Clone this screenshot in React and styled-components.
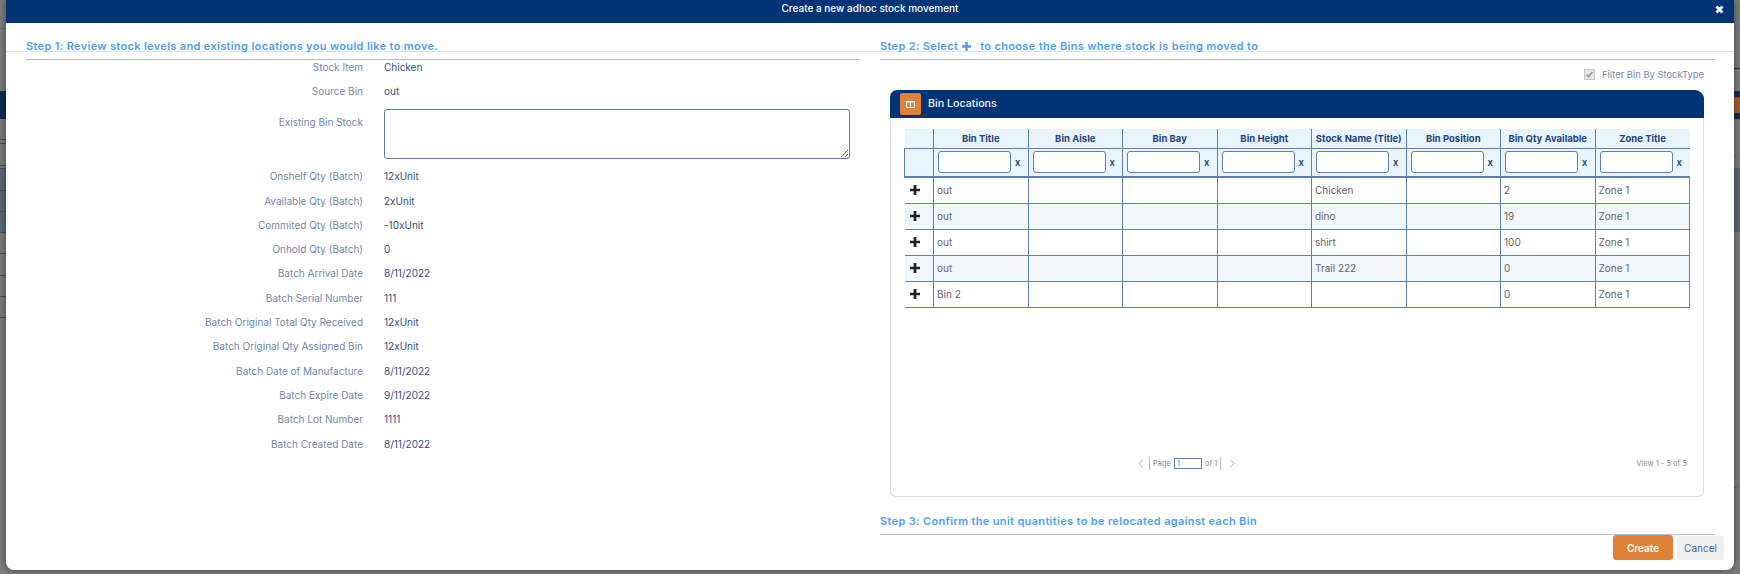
import React from 'react';
import styled, { createGlobalStyle } from 'styled-components';

const GlobalStyle = createGlobalStyle`
    html, body {
        margin: 0;
        padding: 0;
        height: 100%;
        overflow: hidden;
    }
    body {
        font-family: Inter, "Liberation Sans", sans-serif;
        background: #7e7e7e;
    }
    * {
        box-sizing: border-box;
    }
`;

const leftLine = (y, c = '#4a5262') => `linear-gradient(${c}, ${c}) 0 ${y}px / 6px 1px no-repeat`;
const rightLine = (y, c = '#4a5262') => `linear-gradient(${c}, ${c}) 100% ${y}px / 6px 1px no-repeat`;

// what shows of the page behind the dialog
const Page = styled.div`
    height: 574px;
    padding: 0 6px;
    background:
        ${leftLine(28, '#6a6a6a')}, ${leftLine(139)}, ${leftLine(143)}, ${leftLine(165)}, ${leftLine(168)},
        ${leftLine(190)}, ${leftLine(211)}, ${leftLine(232)}, ${leftLine(253)}, ${leftLine(275)},
        ${leftLine(296)}, ${leftLine(317)},
        ${rightLine(28, '#6a6a6a')}, ${rightLine(68, '#0f2b53')}, ${rightLine(156, '#6a6a6a')}, ${rightLine(487, '#6a6a6a')},
        linear-gradient(#a5602a, #a5602a) 100% 97px / 6px 16px no-repeat,
        linear-gradient(#0f2b53, #0f2b53) 0 91px / 100% 28px no-repeat,
        linear-gradient(#5f6b78, #5f6b78) 0 168px / 100% 64px no-repeat,
        #7e7e7e;
`;

const Modal = styled.div`
    height: 570px;
    background: #fff;
    border-radius: 0 0 8px 8px;
    box-shadow: 0 0 8px rgba(0, 0, 0, .5);
    display: flex;
    flex-direction: column;
`;

const ModalHeader = styled.div`
    flex: none;
    height: 23px;
    background: #003476;
    color: #fff;
    font-size: 10px;
    font-weight: 500;
    display: flex;
    align-items: center;
    justify-content: center;
    padding: 0 0 7px 0;
    position: relative;
`;

const CloseIcon = styled.svg`
    position: absolute;
    right: 10px;
    top: 5px;
    width: 9px;
    height: 9px;
`;

const ModalBody = styled.div`
    flex: 1;
    display: grid;
    grid-template-columns: 854px 1fr;
    padding-top: 17px;
    background: linear-gradient(#e3e3e3, #e3e3e3) 0 28px / 100% 1px no-repeat;
`;

const Column = styled.div`
    padding-left: 20px;
    display: flex;
    flex-direction: column;
`;

const StepTitle = styled.div`
    height: 20px;
    color: #4f9ff0;
    font-size: 11px;
    font-weight: 600;
    letter-spacing: .33px;
    line-height: 13px;
    border-bottom: 1px solid #b3bdcf;
    margin-right: ${p => p.$inset || 0}px;
    display: flex;
    align-items: flex-start;
    white-space: pre;
`;

const StepPlus = styled.svg`
    width: 9px;
    height: 9px;
    margin: 2px 6px 0 4px;
`;

const FormGrid = styled.div`
    display: grid;
    grid-template-columns: 337px 1fr;
    column-gap: 21px;
    font-size: 10px;
    line-height: 14px;
    margin-right: 20px;
`;

const Label = styled.div`
    color: #7388ad;
    text-align: right;
    height: ${p => p.$h || 24.3}px;
    padding-top: ${p => p.$top || 0}px;
`;

const Value = styled.div`
    color: #34507f;
    height: ${p => p.$h || 24.3}px;
`;

const NotesBox = styled.textarea`
    display: block;
    width: 466px;
    height: 50px;
    margin-top: 0;
    border: 1px solid #5b7aa8;
    border-radius: 3px;
    background: #fff;
    outline: none;
`;

const FilterRow = styled.div`
    height: 30px;
    display: flex;
    align-items: center;
    justify-content: flex-end;
    gap: 7px;
    padding: 0 30px 2px 0;
    font-size: 9.4px;
    color: #7388ad;
`;

const FakeCheck = styled.span`
    width: 11px;
    height: 11px;
    background: #e6e6e6;
    border: 1px solid #c8c8c8;
    display: flex;
    align-items: center;
    justify-content: center;
`;

const Panel = styled.div`
    width: 814px;
    height: 407px;
    margin-left: 10px;
    border: 1px solid #dcdcdc;
    border-top: 0;
    border-radius: 9px 9px 6px 6px;
    display: flex;
    flex-direction: column;
`;

const PanelHeader = styled.div`
    flex: none;
    height: 28px;
    margin: 0 -1px;
    background: #003476;
    border-radius: 7px 9px 0 0;
    display: flex;
    align-items: center;
    padding-left: 10px;
    gap: 7px;
`;

const PanelTitle = styled.span`
    color: #f1f4f9;
    font-size: 10.7px;
    font-weight: 500;
    margin-bottom: 2px;
`;

const PanelIcon = styled.span`
    width: 21px;
    height: 22px;
    background: #e0813a;
    border-radius: 2px;
    display: flex;
    align-items: center;
    justify-content: center;
`;

const TableWrap = styled.div`
    padding: 11px 13px 0 13px;
    flex: 1;
`;

const Grid = styled.table`
    border-collapse: collapse;
    table-layout: fixed;
    width: 786px;
    font-size: 10px;
`;

const HeadCell = styled.th`
    height: 19px;
    padding: 0;
    background: #eaf4fd;
    color: #1f437d;
    font-size: 9.5px;
    font-weight: 700;
    text-align: center;
    border-left: 1px solid #5f80ad;
    border-bottom: 1px solid #5f80ad;
    white-space: nowrap;
    &:first-child {
        border-left: 0;
    }
`;

const FilterCell = styled.td`
    height: 29px;
    padding: 0 0 0 4px;
    background: #eaf4fd;
    border-left: 1px solid #5f80ad;
    border-bottom: 2px solid #5f80ad;
`;

const FilterInner = styled.div`
    display: flex;
    align-items: center;
    gap: 4px;
    color: #1f437d;
    font-size: 9.5px;
    font-weight: 600;
`;

const FilterInput = styled.span`
    display: block;
    width: 73px;
    height: 22px;
    background: #fff;
    border: 1px solid #5f80ad;
    border-radius: 3px;
`;

const Row = styled.tr`
    background: ${p => (p.$alt ? '#f2f7fc' : '#fff')};
`;

const Cell = styled.td`
    height: 26px;
    padding: 0 3px;
    color: #666;
    border: 1px solid #5f80ad;
    &:first-child {
        border-left: 0;
        padding: 0 4px;
    }
`;

const RowPlus = styled.svg`
    display: block;
    width: 10px;
    height: 10px;
    margin: 0 0 0 1px;
`;

const Pager = styled.div`
    flex: none;
    margin: 0 16px 27px 13px;
    height: 12px;
    display: flex;
    align-items: center;
    color: #8b8b8b;
    font-size: 7.5px;
`;

const PagerControls = styled.div`
    flex: 1;
    display: flex;
    align-items: center;
    padding-left: 234px;
`;

const PagerBar = styled.span`
    width: 1px;
    height: 13px;
    background: #bdbdbd;
    margin: ${p => p.$m};
`;

const PagerInput = styled.span`
    width: 28px;
    height: 11px;
    margin: 0 3px 0 3px;
    border: 1px solid #5f80ad;
    padding-left: 2px;
    line-height: 9px;
`;

const Chevron = styled.svg`
    width: 6px;
    height: 9px;
`;

const Step3 = styled(StepTitle)`
    margin-top: 18px;
`;

const Footer = styled.div`
    display: flex;
    justify-content: flex-end;
    gap: 4px;
    padding-right: 10px;
`;

const Button = styled.button`
    height: ${p => (p.$primary ? 25 : 24)}px;
    width: ${p => (p.$primary ? 60 : 47)}px;
    margin-top: ${p => (p.$primary ? 0 : 1)}px;
    margin-left: ${p => (p.$primary ? 0 : 0)}px;
    border: 0;
    border-radius: 3px;
    background: ${p => (p.$primary ? '#e0813a' : '#efefef')};
    color: ${p => (p.$primary ? '#fff' : '#4d6a96')};
    font-family: inherit;
    font-size: 10px;
    font-weight: ${p => (p.$primary ? 600 : 400)};
    padding: 0;
`;

const fields = [
    ['Stock Item', 'Chicken'],
    ['Source Bin', 'out'],
    ['Existing Bin Stock', null],
    ['Onshelf Qty (Batch)', '12xUnit'],
    ['Available Qty (Batch)', '2xUnit'],
    ['Commited Qty (Batch)', '-10xUnit'],
    ['Onhold Qty (Batch)', '0'],
    ['Batch Arrival Date', '8/11/2022'],
    ['Batch Serial Number', '111'],
    ['Batch Original Total Qty Received', '12xUnit'],
    ['Batch Original Qty Assigned Bin', '12xUnit'],
    ['Batch Date of Manufacture', '8/11/2022'],
    ['Batch Expire Date', '9/11/2022'],
    ['Batch Lot Number', '1111'],
    ['Batch Created Date', '8/11/2022'],
];

const columns = ['Bin Title', 'Bin Aisle', 'Bin Bay', 'Bin Height', 'Stock Name (Title)', 'Bin Position', 'Bin Qty Available', 'Zone Title'];

const rows = [
    ['out', 'Chicken', '2'],
    ['out', 'dino', '19'],
    ['out', 'shirt', '100'],
    ['out', 'Trail 222', '0'],
    ['Bin 2', '', '0'],
];

const plusPath = 'M4 0h3v4h4v3H7v4H4V7H0V4h4z';

const App = () => (
    <Page>
        <GlobalStyle />
        <Modal>
            <ModalHeader>
                Create a new adhoc stock movement
                <CloseIcon viewBox="0 0 9 9">
                    <path d="M1.5 1.5l6 6M7.5 1.5l-6 6" stroke="#fff" strokeWidth="2.8" />
                </CloseIcon>
            </ModalHeader>
            <ModalBody>
                <Column>
                    <StepTitle>Step 1: Review stock levels and existing locations you would like to move.</StepTitle>
                    <FormGrid>
                        {fields.map(([label, value]) =>
                            value === null ? (
                                <React.Fragment key={label}>
                                    <Label $h={60.7} $top={6}>{label}</Label>
                                    <Value $h={60.7}><NotesBox /></Value>
                                </React.Fragment>
                            ) : (
                                <React.Fragment key={label}>
                                    <Label>{label}</Label>
                                    <Value>{value}</Value>
                                </React.Fragment>
                            )
                        )}
                    </FormGrid>
                </Column>
                <Column>
                    <StepTitle $inset={19}>
                        Step 2: Select
                        <StepPlus viewBox="0 0 11 11"><path d={plusPath} fill="#4f9ff0" /></StepPlus>
                        {' to choose the Bins where stock is being moved to'}
                    </StepTitle>
                    <FilterRow>
                        <FakeCheck>
                            <svg width="9" height="9" viewBox="0 0 9 9">
                                <path d="M1.5 4.5l2 2 4-4.5" stroke="#9a9a9a" strokeWidth="1.6" fill="none" />
                            </svg>
                        </FakeCheck>
                        Filter Bin By StockType
                    </FilterRow>
                    <Panel>
                        <PanelHeader>
                            <PanelIcon>
                                <svg width="9" height="7" viewBox="0 0 9 7">
                                    <path d="M.5.5h8v6h-8zM4.5.5v6" stroke="#fff" strokeWidth="1" fill="none" />
                                    <path d="M0 0h9v1.6H0z" fill="#fff" />
                                </svg>
                            </PanelIcon>
                            <PanelTitle>Bin Locations</PanelTitle>
                        </PanelHeader>
                        <TableWrap>
                            <Grid>
                                <colgroup>
                                    <col style={{ width: 29 }} />
                                    {columns.map(c => <col key={c} />)}
                                </colgroup>
                                <thead>
                                    <tr>
                                        <HeadCell />
                                        {columns.map(c => <HeadCell key={c}>{c}</HeadCell>)}
                                    </tr>
                                    <tr>
                                        <FilterCell />
                                        {columns.map(c => (
                                            <FilterCell key={c}>
                                                <FilterInner><FilterInput />x</FilterInner>
                                            </FilterCell>
                                        ))}
                                    </tr>
                                </thead>
                                <tbody>
                                    {rows.map(([title, name, qty], i) => (
                                        <Row key={i} $alt={i % 2 === 1}>
                                            <Cell><RowPlus viewBox="0 0 11 11"><path d={plusPath} fill="#222" /></RowPlus></Cell>
                                            <Cell>{title}</Cell>
                                            <Cell />
                                            <Cell />
                                            <Cell />
                                            <Cell>{name}</Cell>
                                            <Cell />
                                            <Cell>{qty}</Cell>
                                            <Cell>Zone 1</Cell>
                                        </Row>
                                    ))}
                                </tbody>
                            </Grid>
                        </TableWrap>
                        <Pager>
                            <PagerControls>
                                <Chevron viewBox="0 0 6 9"><path d="M5 .5l-4 4 4 4" stroke="#aaa" fill="none" /></Chevron>
                                <PagerBar $m="0 3px 0 5px" />
                                Page
                                <PagerInput>1</PagerInput>
                                of 1
                                <PagerBar $m="0 8px 0 3px" />
                                <Chevron viewBox="0 0 6 9"><path d="M1 .5l4 4-4 4" stroke="#aaa" fill="none" /></Chevron>
                            </PagerControls>
                            View 1 - 5 of 5
                        </Pager>
                    </Panel>
                    <Step3 $inset={19}>Step 3: Confirm the unit quantities to be relocated against each Bin</Step3>
                    <Footer>
                        <Button $primary>Create</Button>
                        <Button>Cancel</Button>
                    </Footer>
                </Column>
            </ModalBody>
        </Modal>
    </Page>
);

export default App;
